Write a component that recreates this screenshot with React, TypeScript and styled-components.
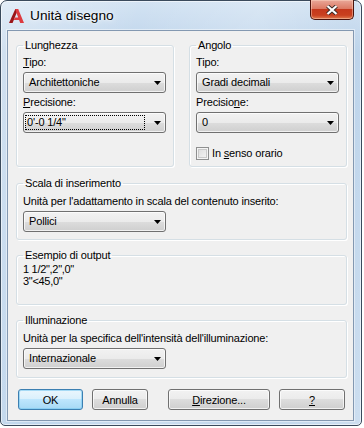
import React from "react";
import styled, { createGlobalStyle } from "styled-components";

const GlobalStyle = createGlobalStyle`
  html, body {
    margin: 0;
    padding: 0;
    background: #ffffff;
  }
  body {
    font-family: "Liberation Sans", Arial, sans-serif;
    font-size: 11px;
    letter-spacing: -0.16px;
    color: #000;
  }
  * {
    box-sizing: border-box;
  }
`;

const Window = styled.div`
  width: 362px;
  height: 426px;
  display: flex;
  flex-direction: column;
  padding: 0 7px 4px 6px;
  border: 1px solid #3a4a5c;
  border-radius: 7px 7px 5px 5px;
  box-shadow: inset 0 0 0 1px rgba(255, 255, 255, 0.55);
  background:
    linear-gradient(
      105deg,
      rgba(255, 255, 255, 0.35) 0%,
      rgba(255, 255, 255, 0) 30%,
      rgba(255, 255, 255, 0.18) 55%,
      rgba(255, 255, 255, 0) 75%,
      rgba(255, 255, 255, 0.2) 100%
    ),
    linear-gradient(#d3e3f3 0%, #bcd3ea 12%, #c0d6ec 100%);
`;

const TitleBar = styled.div`
  height: 29px;
  display: flex;
  align-items: center;
  padding-left: 1px;
`;

const Title = styled.span`
  margin-left: 5px;
  font-size: 13.7px;
  letter-spacing: 0;
  color: #000;
  text-shadow: 0 0 6px rgba(255, 255, 255, 0.95), 0 0 2px #fff;
`;

const CloseButton = styled.div`
  margin-left: auto;
  align-self: flex-start;
  margin-top: -1px;
  width: 44px;
  height: 20px;
  display: flex;
  align-items: center;
  justify-content: center;
  border: 1px solid #4a120b;
  border-top: none;
  border-radius: 0 0 5px 5px;
  background: linear-gradient(
    #e9a899 0%,
    #dc7a64 45%,
    #c5381c 50%,
    #c9401f 80%,
    #e07a4e 100%
  );
  box-shadow: inset 0 0 0 1px rgba(255, 220, 200, 0.45);
`;

const Client = styled.div`
  flex: 1;
  display: flex;
  flex-direction: column;
  padding: 8px 6px 0 8px;
  background: #f0f0f0;
  border: 1px solid #8398b1;
  box-shadow: 0 0 0 1px rgba(255, 255, 255, 0.45);
`;

const TopRow = styled.div`
  display: grid;
  grid-template-columns: 158px 158px;
  column-gap: 15px;
`;

const Group = styled.fieldset<{ $height: number; $pt: number; $mt?: number }>`
  margin: ${(p) => p.$mt ?? 0}px 0 0 0;
  padding: ${(p) => p.$pt}px 6px 0 6px;
  min-width: 0;
  height: ${(p) => p.$height}px;
  border: 1px solid #d5dfe5;
  border-radius: 3px;
  box-shadow: 1px 1px 0 #fff, inset 1px 1px 0 #fff;
`;

const Legend = styled.legend`
  padding: 0 2px;
  line-height: 13px;
`;

const Label = styled.div`
  line-height: 13px;
  white-space: nowrap;
`;

const Key = styled.span`
  text-decoration: underline;
  text-underline-offset: 1px;
`;

const Combo = styled.div<{ $focused?: boolean; $mb?: number }>`
  width: 143px;
  height: 21px;
  margin: 3px 0 ${(p) => p.$mb ?? 0}px 0;
  display: flex;
  align-items: center;
  padding: 0 4px 0 ${(p) => (p.$focused ? 1 : 4)}px;
  border: 1px solid #707070;
  border-radius: 3px;
  background: linear-gradient(#f2f2f2 0%, #ebebeb 50%, #dddddd 50%, #cfcfcf 100%);
  box-shadow: inset 0 0 0 1px rgba(255, 255, 255, 0.7);
  white-space: nowrap;
`;

const ComboText = styled.span<{ $focused?: boolean }>`
  flex: 1;
  height: 15px;
  line-height: 13px;
  margin-right: ${(p) => (p.$focused ? 9 : 0)}px;
  padding-left: ${(p) => (p.$focused ? 1 : 0)}px;
  border: 1px dotted ${(p) => (p.$focused ? "#000" : "transparent")};
`;

const CheckRow = styled.div`
  margin-top: 14px;
  display: flex;
  align-items: center;
  gap: 3px;
  line-height: 13px;
`;

const CheckBox = styled.span`
  width: 13px;
  height: 13px;
  border: 1px solid #8e8f8f;
  background: linear-gradient(135deg, #dadada 0%, #f6f6f6 100%);
  box-shadow: inset 0 0 0 1px #f4f4f4, inset 0 0 0 2px #c9c9c9;
`;

const OutputText = styled.div`
  line-height: 12px;
  letter-spacing: -0.3px;
`;

const ButtonRow = styled.div`
  margin-top: 11px;
  padding-left: 2px;
  display: flex;
`;

const Button = styled.button<{ $w: number; $ml?: number; $default?: boolean }>`
  width: ${(p) => p.$w}px;
  height: 21px;
  margin-left: ${(p) => p.$ml ?? 0}px;
  padding: 0;
  font-family: inherit;
  font-size: 11px;
  letter-spacing: -0.16px;
  color: #000;
  border-radius: 3px;
  border: 1px solid ${(p) => (p.$default ? "#3c7fb1" : "#707070")};
  background: ${(p) =>
    p.$default
      ? "linear-gradient(#eaf6fd 0%, #d9f0fc 50%, #bee6fd 50%, #a7d9f5 100%)"
      : "linear-gradient(#f2f2f2 0%, #ebebeb 50%, #dddddd 50%, #cfcfcf 100%)"};
  box-shadow: inset 0 0 0 1px
    ${(p) => (p.$default ? "rgba(120, 200, 240, 0.6)" : "rgba(255, 255, 255, 0.7)")};
`;

const Arrow = () => (
  <svg width="7" height="4" viewBox="0 0 7 4">
    <polygon points="0,0 7,0 3.5,4" fill="#000" />
  </svg>
);

const AppIcon = () => (
  <svg width="17" height="16" viewBox="0 0 17 16">
    <path d="M1 15 L7.3 1 H10.2 L4.6 15 Z" fill="#9b1519" />
    <path
      d="M7.3 1 H10.2 L16 15 H12.2 L11.1 12 H5.8 L6.9 9.6 H10.2 L8.7 5.6 Z"
      fill="#dd3a3f"
    />
  </svg>
);

const CloseGlyph = () => (
  <svg width="12" height="10" viewBox="0 0 12 10">
    <path d="M1.5 1 L10.5 9 M10.5 1 L1.5 9" stroke="#3a2a26" strokeWidth="4" />
    <path d="M1.5 1 L10.5 9 M10.5 1 L1.5 9" stroke="#fff" strokeWidth="2.2" />
  </svg>
);

const Select = ({
  value,
  focused,
  mb,
}: {
  value: string;
  focused?: boolean;
  mb?: number;
}) => (
  <Combo $focused={focused} $mb={mb}>
    <ComboText $focused={focused}>{value}</ComboText>
    <Arrow />
  </Combo>
);

const App = () => {
  return (
    <>
      <GlobalStyle />
      <Window>
        <TitleBar>
          <AppIcon />
          <Title>Unità disegno</Title>
          <CloseButton>
            <CloseGlyph />
          </CloseButton>
        </TitleBar>
        <Client>
          <TopRow>
            <Group $height={128} $pt={4}>
              <Legend>Lunghezza</Legend>
              <Label>
                <Key>T</Key>ipo:
              </Label>
              <Select value="Architettoniche" mb={3} />
              <Label>
                <Key>P</Key>recisione:
              </Label>
              <Select value={'0\'-0 1/4"'} focused />
            </Group>
            <Group $height={128} $pt={4}>
              <Legend>Angolo</Legend>
              <Label>Tipo:</Label>
              <Select value="Gradi decimali" mb={3} />
              <Label>
                Precisio<Key>n</Key>e:
              </Label>
              <Select value="0" />
              <CheckRow>
                <CheckBox />
                <span>
                  In <Key>s</Key>enso orario
                </span>
              </CheckRow>
            </Group>
          </TopRow>

          <Group $height={63} $pt={5} $mt={10}>
            <Legend>Scala di inserimento</Legend>
            <Label>Unità per l'adattamento in scala del contenuto inserito:</Label>
            <Select value="Pollici" />
          </Group>

          <Group $height={56} $pt={1} $mt={9}>
            <Legend>Esempio di output</Legend>
            <OutputText>1 1/2",2",0"</OutputText>
            <OutputText>3"&lt;45,0"</OutputText>
          </Group>

          <Group $height={64} $pt={5} $mt={9}>
            <Legend>Illuminazione</Legend>
            <Label>Unità per la specifica dell'intensità dell'illuminazione:</Label>
            <Select value="Internazionale" />
          </Group>

          <ButtonRow>
            <Button $w={65} $default>
              OK
            </Button>
            <Button $w={56} $ml={9}>
              Annulla
            </Button>
            <Button $w={102} $ml={20}>
              <Key>D</Key>irezione...
            </Button>
            <Button $w={66} $ml={9}>
              <Key>?</Key>
            </Button>
          </ButtonRow>
        </Client>
      </Window>
    </>
  );
};

export default App;
